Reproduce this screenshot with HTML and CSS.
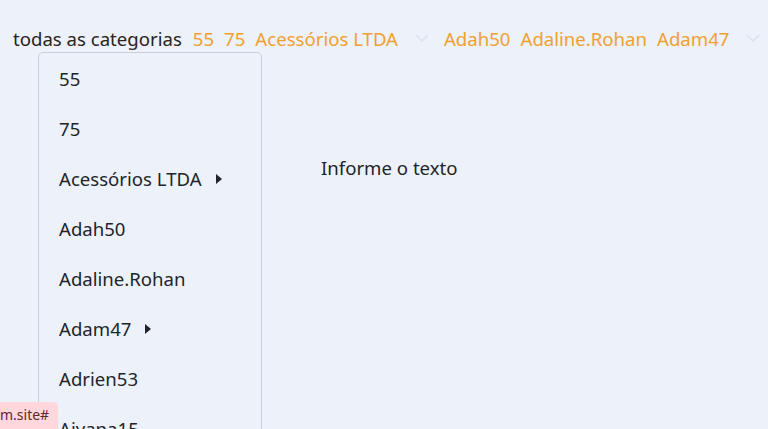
FILE: index.html
```html
<!DOCTYPE html>
<html lang="pt">
<head>
<meta charset="utf-8">
<link rel="stylesheet" href="styles.css">
</head>
<body>
<nav class="menubar">
  <span class="menu-title">todas as categorias</span>
  <span class="menu-item">55</span>
  <span class="menu-item">75</span>
  <span class="menu-item">Acessórios LTDA</span>
  <span class="chev"><svg width="14" height="8" viewBox="0 0 14 8"><path d="M1 1l6 6 6-6" fill="none" stroke="#dce1eb" stroke-width="1.6"/></svg></span>
  <span class="menu-item">Adah50</span>
  <span class="menu-item">Adaline.Rohan</span>
  <span class="menu-item">Adam47</span>
  <span class="chev"><svg width="14" height="8" viewBox="0 0 14 8"><path d="M1 1l6 6 6-6" fill="none" stroke="#dce1eb" stroke-width="1.6"/></svg></span>
</nav>
<main class="content">
  <p class="hint">Informe o texto</p>
</main>
<ul class="dropdown">
  <li>55</li>
  <li>75</li>
  <li>Acessórios LTDA <span class="caret"></span></li>
  <li>Adah50</li>
  <li>Adaline.Rohan</li>
  <li>Adam47 <span class="caret"></span></li>
  <li>Adrien53</li>
  <li>Aiyana15</li>
</ul>
<div class="status">m.site#</div>
</body>
</html>
```
FILE: styles.css
```css
html, body {
  margin: 0;
  padding: 0;
  height: 100%;
  overflow: hidden;
}
body {
  background: #edf1f9;
  font-family: "Noto Sans", "Open Sans", sans-serif;
  color: #212529;
  position: relative;
}
.menubar {
  display: flex;
  align-items: center;
  gap: 10px;
  padding: 26px 0 0 13px;
  height: 24px;
  font-size: 18.6px;
  white-space: nowrap;
}
.menu-title {
  color: #2a2320;
  margin-right: 1px;
}
.menu-item {
  color: #f0a030;
}
.chev {
  display: flex;
  padding: 0 5px 0 7px;
}
.content {
  padding: 106px 0 0 321px;
}
.hint {
  margin: 0;
  font-size: 18.6px;
  line-height: 24px;
}
.dropdown {
  position: absolute;
  left: 38px;
  top: 52px;
  width: 224px;
  margin: 0;
  padding: 0;
  list-style: none;
  border: 1px solid #c9ced8;
  border-radius: 5px;
  background: #edf1f9;
  height: 400px;
  overflow: hidden;
  box-sizing: border-box;
}
.dropdown li {
  display: flex;
  align-items: center;
  height: 50px;
  padding-left: 20px;
  font-size: 18.6px;
  color: #212529;
}
.caret {
  display: inline-block;
  width: 0;
  height: 0;
  border-top: 5.5px solid transparent;
  border-bottom: 5.5px solid transparent;
  border-left: 6px solid #212529;
  margin-left: 14px;
  margin-top: 2px;
}
.status {
  position: absolute;
  left: -12px;
  bottom: 0;
  padding: 3px 9px 5px 12px;
  background: #ffd7dc;
  color: #5a2a30;
  font-size: 14px;
  border-top-right-radius: 5px;
  line-height: 19px;
}
```
